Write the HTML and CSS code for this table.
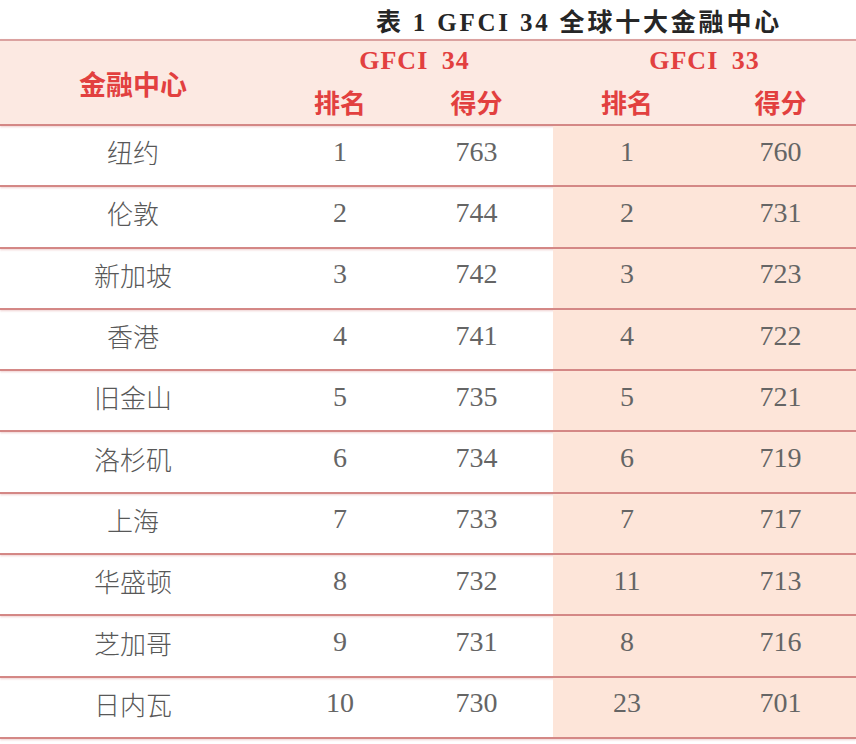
FILE: index.html
```html
<!DOCTYPE html>
<html lang="zh-CN">
<head>
<meta charset="utf-8">
<title>GFCI 34 全球十大金融中心</title>
<link rel="stylesheet" href="styles.css">
</head>
<body>
<div class="page">
  <div class="caption">表 1 GFCI 34 全球十大金融中心</div>
  <div class="table">
    <div class="head">
      <div class="h-name">金融中心</div>
      <div class="h-group g34">GFCI 34</div>
      <div class="h-group g33">GFCI 33</div>
      <div class="h-sub c2">排名</div>
      <div class="h-sub c3">得分</div>
      <div class="h-sub c4">排名</div>
      <div class="h-sub c5">得分</div>
    </div>
    <div class="row"><div class="city">纽约</div><div class="num c2">1</div><div class="num c3">763</div><div class="num c4 old">1</div><div class="num c5 old">760</div></div>
    <div class="row"><div class="city">伦敦</div><div class="num c2">2</div><div class="num c3">744</div><div class="num c4 old">2</div><div class="num c5 old">731</div></div>
    <div class="row"><div class="city">新加坡</div><div class="num c2">3</div><div class="num c3">742</div><div class="num c4 old">3</div><div class="num c5 old">723</div></div>
    <div class="row"><div class="city">香港</div><div class="num c2">4</div><div class="num c3">741</div><div class="num c4 old">4</div><div class="num c5 old">722</div></div>
    <div class="row"><div class="city">旧金山</div><div class="num c2">5</div><div class="num c3">735</div><div class="num c4 old">5</div><div class="num c5 old">721</div></div>
    <div class="row"><div class="city">洛杉矶</div><div class="num c2">6</div><div class="num c3">734</div><div class="num c4 old">6</div><div class="num c5 old">719</div></div>
    <div class="row"><div class="city">上海</div><div class="num c2">7</div><div class="num c3">733</div><div class="num c4 old">7</div><div class="num c5 old">717</div></div>
    <div class="row"><div class="city">华盛顿</div><div class="num c2">8</div><div class="num c3">732</div><div class="num c4 old">11</div><div class="num c5 old">713</div></div>
    <div class="row"><div class="city">芝加哥</div><div class="num c2">9</div><div class="num c3">731</div><div class="num c4 old">8</div><div class="num c5 old">716</div></div>
    <div class="row"><div class="city">日内瓦</div><div class="num c2">10</div><div class="num c3">730</div><div class="num c4 old">23</div><div class="num c5 old">701</div></div>
  </div>
</div>
</body>
</html>
```

FILE: styles.css
```css
html, body {
  margin: 0;
  padding: 0;
  background: #ffffff;
}

.page {
  width: 856px;
  height: 744px;
  overflow: hidden;
  font-family: "Liberation Serif", "Noto Sans CJK SC", serif;
}

.caption {
  height: 39px;
  display: flex;
  align-items: center;
  justify-content: flex-end;
  padding-right: 74px;
  font-family: "Liberation Serif", "Noto Sans CJK SC", serif;
  font-size: 25px;
  font-weight: 700;
  letter-spacing: 2.8px;
  color: #262626;
  box-sizing: border-box;
}

.table {
  display: flex;
  flex-direction: column;
}

.head {
  display: grid;
  grid-template-columns: 266px 148px 139px 148px 155px;
  grid-template-rows: 40px 43px;
  height: 87px;
  box-sizing: border-box;
  background: #fce9e2;
  border-top: 2px solid #dba2a0;
  border-bottom: 2px solid #d48886;
  box-shadow: 0 1px 2px rgba(210, 120, 120, 0.35);
  color: #e2403f;
  font-family: "Noto Sans CJK SC", sans-serif;
  font-weight: 700;
}

.h-name {
  grid-row: 1 / 3;
  grid-column: 1;
  display: flex;
  align-items: center;
  justify-content: center;
  font-size: 27px;
  padding-top: 2px;
}

.h-group {
  display: flex;
  align-items: center;
  justify-content: center;
  font-family: "Liberation Serif", serif;
  font-size: 26px;
  letter-spacing: 1px;
  word-spacing: 6px;
}

.g34 { grid-column: 2 / 4; grid-row: 1; padding-left: 10px; }
.g33 { grid-column: 4 / 6; grid-row: 1; }

.h-sub {
  grid-row: 2;
  display: flex;
  align-items: center;
  justify-content: center;
  font-size: 26px;
  padding-bottom: 2px;
}

.row {
  display: grid;
  grid-template-columns: 266px 148px 139px 148px 155px;
  height: 61.3px;
  box-sizing: border-box;
  border-bottom: 2px solid #d48886;
  box-shadow: 0 1px 2px rgba(210, 120, 120, 0.35);
  color: #555555;
}

.row > div {
  display: flex;
  align-items: center;
  justify-content: center;
  padding-bottom: 8px;
}

.city {
  font-family: "Noto Sans CJK SC", sans-serif;
  font-size: 26px;
  font-weight: 300;
  color: #585858;
}

.num {
  font-family: "Liberation Serif", serif;
  font-size: 28px;
  color: #656565;
}

.c3 { padding-right: 14px; }
.c5 { padding-left: 4px; }

.old {
  background: #fde5d9;
}
```
